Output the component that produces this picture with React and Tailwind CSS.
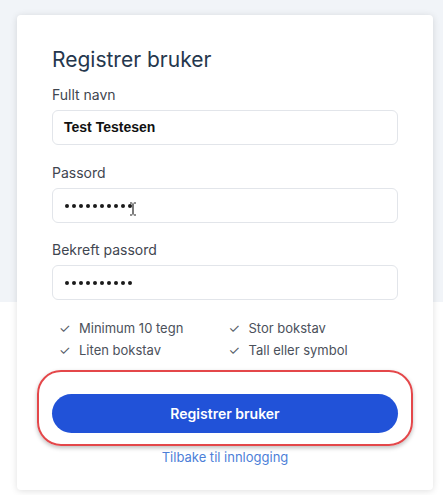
import React from "react";

function Field({ label, children, className = "" }) {
  return (
    <div className={className}>
      <div className="text-[14px] leading-5 text-[#3f4650]">{label}</div>
      <div className="mt-[5px] h-[35px] rounded-md border border-[#e2e5ea] bg-white flex items-center px-[11px] relative">
        {children}
      </div>
    </div>
  );
}

function Dots() {
  return (
    <span className="flex items-center gap-[3px] pl-[1px]">
      {Array.from({ length: 10 }).map((_, i) => (
        <span key={i} className="block w-[4px] h-[4px] rounded-full bg-[#1a1a1a]" />
      ))}
    </span>
  );
}

function Check({ text }) {
  return (
    <div className="flex items-center gap-[9px]">
      <span className="text-[13px] text-[#555c66] w-[11px]">✓</span>
      <span>{text}</span>
    </div>
  );
}

export default function App() {
  return (
    <div
      className="min-h-[495px] w-full bg-[linear-gradient(to_bottom,#f1f4f8_302px,#ffffff_302px)] pt-[15px] pl-[17px] pr-[10px]"
      style={{ fontFamily: "Inter, 'Noto Sans', sans-serif" }}
    >
      <div className="w-[416px] rounded bg-white shadow-[0_1px_7px_rgba(0,0,0,0.13)] px-[35px] pt-[31px] pb-[23px]">
        <h1 className="text-[21px] leading-7 font-normal text-[#25374d]">Registrer bruker</h1>
        <Field label="Fullt navn" className="mt-[11px]">
          <span
            className="text-[14px] font-bold text-[#111]"
            style={{ fontFamily: "'Liberation Sans', Arial, sans-serif" }}
          >
            Test Testesen
          </span>
        </Field>
        <Field label="Passord" className="mt-[18px]">
          <Dots />
          <svg className="absolute left-[76px] top-[13px]" width="8" height="14" viewBox="0 0 8 14">
            <path d="M1 1h2.2M4.8 1H7M1 13h2.2M4.8 13H7M4 1.5v11" stroke="#222" strokeWidth="1.2" fill="none" />
          </svg>
        </Field>
        <Field label="Bekreft passord" className="mt-[17px]">
          <Dots />
        </Field>
        <div className="mt-[17px] grid grid-cols-2 pl-[7px] text-[13px] leading-[22px] text-[#4b515b]">
          <Check text="Minimum 10 tegn" />
          <Check text="Stor bokstav" />
          <Check text="Liten bokstav" />
          <Check text="Tall eller symbol" />
        </div>
        <div className="relative mt-[33px]">
          <div className="absolute -left-[15px] -right-[15px] -top-[24px] -bottom-[13px] rounded-[24px] border-2 border-[#e4474a] shadow-[0_2px_4px_rgba(0,0,0,0.25)]" />
          <button className="relative w-full h-[39px] rounded-full bg-[#2152d8] text-white text-[14px] font-semibold">
            Registrer bruker
          </button>
        </div>
        <div className="mt-[14px] text-center text-[13px] leading-5 text-[#4d7fd8]">Tilbake til innlogging</div>
      </div>
    </div>
  );
}
